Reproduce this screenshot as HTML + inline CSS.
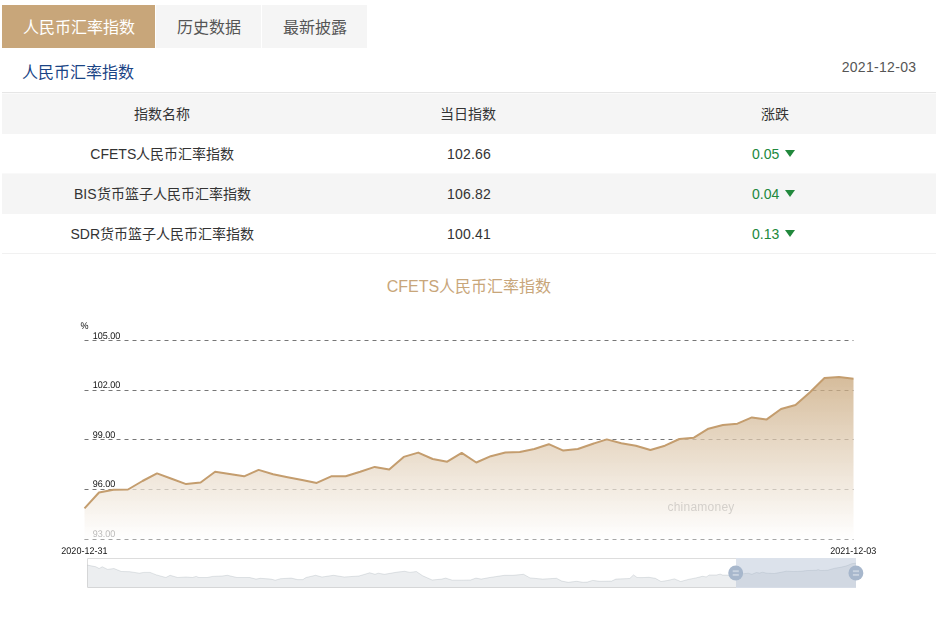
<!DOCTYPE html>
<html lang="zh-CN"><head><meta charset="utf-8"><title>人民币汇率指数</title>
<style>
html,body{margin:0;padding:0;background:#fff;}
body{width:943px;height:626px;position:relative;overflow:hidden;font-family:"Liberation Sans",sans-serif;color:#333;}
.tab{position:absolute;top:5px;height:43px;line-height:45px;font-size:16px;text-align:center;background:#f5f5f5;color:#555;}
.tab.on{background:#c8a67a;color:#fff;}
.h{position:absolute;left:22px;top:60.6px;height:24px;line-height:24px;font-size:16px;color:#1a4485;}
.date{position:absolute;right:26.7px;top:58px;height:18px;line-height:18px;font-size:14px;color:#555;letter-spacing:0.3px;}
.tb{position:absolute;left:2px;top:92px;width:934px;}
.bt{height:1px;background:#e6e6e6;}
.bt2{height:1px;background:#fafafa;}
.r{position:relative;height:40px;line-height:40px;font-size:14px;color:#333;}
.r.g{background:#f5f5f5;}
.r span{position:absolute;top:0;white-space:nowrap;}
.c1{left:0;width:320.6px;text-align:center;}
.c2{left:320px;width:294px;text-align:center;letter-spacing:0.2px;}
.hd .c2{left:319px;letter-spacing:0;}
.c3{left:613px;width:320px;text-align:center;}
.n{left:750px;color:#21883c;}
.tri{position:absolute;left:783px;top:16px;width:0;height:0;border-left:5px solid transparent;border-right:5px solid transparent;border-top:7px solid #21883c;}
.bb{position:absolute;left:2px;top:253px;width:934px;height:1px;background:#f1f1f1;}
.fr{position:absolute;left:2px;top:173px;width:934px;height:1px;background:#f9f9f9;}
svg{position:absolute;left:0;top:260px;}
svg text{font-family:"Liberation Sans",sans-serif;}
</style></head><body>
<div class="tab on" style="left:2px;width:153px;">人民币汇率指数</div>
<div class="tab" style="left:156px;width:105px;">历史数据</div>
<div class="tab" style="left:262px;width:105px;">最新披露</div>
<div class="h">人民币汇率指数</div>
<div class="date">2021-12-03</div>
<div class="tb">
<div class="bt"></div><div class="bt2"></div>
<div class="r g hd"><span class="c1">指数名称</span><span class="c2">当日指数</span><span class="c3">涨跌</span></div>
<div class="r"><span class="c1">CFETS人民币汇率指数</span><span class="c2">102.66</span><span class="n">0.05</span><i class="tri"></i></div>
<div class="r g"><span class="c1">BIS货币篮子人民币汇率指数</span><span class="c2">106.82</span><span class="n">0.04</span><i class="tri"></i></div>
<div class="r"><span class="c1">SDR货币篮子人民币汇率指数</span><span class="c2">100.41</span><span class="n">0.13</span><i class="tri"></i></div>
</div>
<div class="bb"></div><div class="fr"></div>
<svg width="943" height="366" viewBox="0 0 943 366">
<defs>
<linearGradient id="ag" gradientUnits="userSpaceOnUse" x1="0" y1="117" x2="0" y2="279.5">
<stop offset="0" stop-color="#c8a67a" stop-opacity="0.75"/>
<stop offset="1" stop-color="#ffffff" stop-opacity="0.7"/>
</linearGradient>
</defs>
<text x="469" y="32" text-anchor="middle" font-size="16" fill="#c8a67a">CFETS人民币汇率指数</text>
<g stroke="#767676" stroke-width="1" stroke-dasharray="4 4" fill="none"><line x1="84.5" x2="853.5" y1="80.5" y2="80.5"/><line x1="84.5" x2="853.5" y1="130.5" y2="130.5"/><line x1="84.5" x2="853.5" y1="179.5" y2="179.5"/><line x1="84.5" x2="853.5" y1="229.5" y2="229.5"/><line x1="84.5" x2="853.5" y1="279.5" y2="279.5"/></g>
<g font-size="9.7" fill="#111" text-rendering="geometricPrecision" opacity="0.99"><text transform="translate(92.7,78.7) scale(0.93,1)">105.00</text><text transform="translate(92.7,128.2) scale(0.93,1)">102.00</text><text transform="translate(92.7,177.8) scale(0.93,1)">99.00</text><text transform="translate(92.7,227.4) scale(0.93,1)">96.00</text><text transform="translate(92.7,277.0) scale(0.93,1)">93.00</text>
<text transform="translate(84.6,68.80000000000001) scale(0.93,1)" text-anchor="middle">%</text>
<text transform="translate(84.4,294) scale(0.93,1)" text-anchor="middle">2020-12-31</text>
<text transform="translate(853.3,294) scale(0.93,1)" text-anchor="middle">2021-12-03</text>
</g>
<polygon points="84.5,248.4 99.0,232.5 113.5,229.8 128.0,229.5 142.5,221.0 157.0,213.4 171.6,218.7 186.1,224.1 200.6,222.5 215.1,211.8 229.6,214.0 244.1,216.3 258.6,209.9 273.1,214.2 287.6,217.2 302.1,220.1 316.7,222.9 331.2,216.3 345.7,216.3 360.2,211.8 374.7,206.9 389.2,209.6 403.7,196.9 418.2,192.6 432.7,199.0 447.2,201.7 461.7,192.9 476.3,202.5 490.8,196.2 505.3,192.5 519.8,192.1 534.3,189.0 548.8,184.2 563.3,190.6 577.8,189.0 592.3,184.0 606.8,179.4 621.3,183.2 635.9,185.7 650.4,190.0 664.9,185.7 679.4,179.0 693.9,177.7 708.4,168.7 722.9,165.0 737.4,163.7 751.9,157.4 766.4,159.6 781.0,149.0 795.5,145.0 810.0,132.3 824.5,118.0 839.0,117.0 853.5,118.8 853.5,279.5 84.5,279.5" fill="url(#ag)"/>
<text x="701" y="250.7" text-anchor="middle" font-size="12" letter-spacing="0.25" fill="#d4d0cb">chinamoney</text>
<polyline points="84.5,248.4 99.0,232.5 113.5,229.8 128.0,229.5 142.5,221.0 157.0,213.4 171.6,218.7 186.1,224.1 200.6,222.5 215.1,211.8 229.6,214.0 244.1,216.3 258.6,209.9 273.1,214.2 287.6,217.2 302.1,220.1 316.7,222.9 331.2,216.3 345.7,216.3 360.2,211.8 374.7,206.9 389.2,209.6 403.7,196.9 418.2,192.6 432.7,199.0 447.2,201.7 461.7,192.9 476.3,202.5 490.8,196.2 505.3,192.5 519.8,192.1 534.3,189.0 548.8,184.2 563.3,190.6 577.8,189.0 592.3,184.0 606.8,179.4 621.3,183.2 635.9,185.7 650.4,190.0 664.9,185.7 679.4,179.0 693.9,177.7 708.4,168.7 722.9,165.0 737.4,163.7 751.9,157.4 766.4,159.6 781.0,149.0 795.5,145.0 810.0,132.3 824.5,118.0 839.0,117.0 853.5,118.8" fill="none" stroke="#c49d6e" stroke-width="2" stroke-linejoin="round"/>
<path d="M736,298.5 H87.5 V327.5 H736" fill="none" stroke="#ddd" stroke-width="1"/>
<polygon points="87.5,305.1 95.9,306.8 99.1,308.5 102.3,306.8 107.6,309.4 113.9,308.5 121.4,311.5 129.8,311.7 139.4,313.2 143.6,312.4 150.0,312.4 156.4,314.9 165.9,317.5 170.1,315.3 177.6,317.5 186.0,317.0 192.4,317.5 196.2,316.4 198.8,317.5 207.3,317.5 212.6,316.4 222.1,316.0 227.4,315.3 236.9,317.5 249.7,317.5 256.0,319.1 260.3,318.3 270.9,319.1 275.3,320.2 280.6,318.7 291.2,318.1 297.6,319.6 302.9,319.6 306.0,317.5 315.6,315.3 322.0,317.0 333.6,315.3 344.2,317.0 359.0,316.0 369.7,312.8 375.0,314.3 378.2,313.2 384.5,314.3 397.3,312.1 404.7,311.3 410.0,312.4 416.3,311.5 422.7,315.8 432.2,320.0 441.8,319.1 445.6,318.1 452.4,320.2 460.9,320.2 470.6,320.0 475.9,318.1 481.2,319.1 489.7,317.5 504.5,315.3 513.0,315.3 523.6,314.3 530.0,317.9 542.7,319.1 556.5,318.3 561.8,321.1 568.2,322.3 576.6,321.3 583.0,322.3 587.3,322.1 592.6,320.4 600.0,321.3 611.6,321.1 615.9,319.1 629.7,318.5 633.5,314.9 637.1,317.5 642.0,317.6 648.9,317.3 655.3,318.3 661.0,321.5 667.4,320.5 674.4,318.9 680.7,321.5 688.4,319.4 696.0,317.9 702.4,316.3 706.2,316.9 709.4,315.0 716.4,315.0 720.2,314.1 722.7,315.1 728.4,315.1 736.0,314.4 743.1,313.8 748.2,313.2 751.9,314.3 756.4,312.5 759.5,313.1 762.7,312.2 766.5,313.2 774.2,313.5 779.3,312.6 786.3,311.2 793.3,311.5 800.9,311.3 807.3,310.5 816.2,310.3 818.1,309.6 820.6,310.5 827.6,310.3 834.0,308.4 841.6,307.1 846.7,305.8 851.8,303.7 856.0,303.2 856,327.5 87.5,327.5" fill="#2f4554" fill-opacity="0.09"/>
<polyline points="87.5,305.1 95.9,306.8 99.1,308.5 102.3,306.8 107.6,309.4 113.9,308.5 121.4,311.5 129.8,311.7 139.4,313.2 143.6,312.4 150.0,312.4 156.4,314.9 165.9,317.5 170.1,315.3 177.6,317.5 186.0,317.0 192.4,317.5 196.2,316.4 198.8,317.5 207.3,317.5 212.6,316.4 222.1,316.0 227.4,315.3 236.9,317.5 249.7,317.5 256.0,319.1 260.3,318.3 270.9,319.1 275.3,320.2 280.6,318.7 291.2,318.1 297.6,319.6 302.9,319.6 306.0,317.5 315.6,315.3 322.0,317.0 333.6,315.3 344.2,317.0 359.0,316.0 369.7,312.8 375.0,314.3 378.2,313.2 384.5,314.3 397.3,312.1 404.7,311.3 410.0,312.4 416.3,311.5 422.7,315.8 432.2,320.0 441.8,319.1 445.6,318.1 452.4,320.2 460.9,320.2 470.6,320.0 475.9,318.1 481.2,319.1 489.7,317.5 504.5,315.3 513.0,315.3 523.6,314.3 530.0,317.9 542.7,319.1 556.5,318.3 561.8,321.1 568.2,322.3 576.6,321.3 583.0,322.3 587.3,322.1 592.6,320.4 600.0,321.3 611.6,321.1 615.9,319.1 629.7,318.5 633.5,314.9 637.1,317.5 642.0,317.6 648.9,317.3 655.3,318.3 661.0,321.5 667.4,320.5 674.4,318.9 680.7,321.5 688.4,319.4 696.0,317.9 702.4,316.3 706.2,316.9 709.4,315.0 716.4,315.0 720.2,314.1 722.7,315.1 728.4,315.1 736.0,314.4 743.1,313.8 748.2,313.2 751.9,314.3 756.4,312.5 759.5,313.1 762.7,312.2 766.5,313.2 774.2,313.5 779.3,312.6 786.3,311.2 793.3,311.5 800.9,311.3 807.3,310.5 816.2,310.3 818.1,309.6 820.6,310.5 827.6,310.3 834.0,308.4 841.6,307.1 846.7,305.8 851.8,303.7 856.0,303.2" fill="none" stroke="#2f4554" stroke-opacity="0.26" stroke-width="0.5"/>
<rect x="736" y="298" width="120" height="30" fill="#a7b7cc" fill-opacity="0.4"/>
<g fill="#a7b7cc">
<circle cx="735.7" cy="312.95000000000005" r="7.45"/><circle cx="855.9" cy="312.95000000000005" r="7.45"/>
</g>
<g stroke="#c9d3e0" stroke-width="1.9">
<line x1="732.7" x2="738.8" y1="311.20000000000005" y2="311.20000000000005"/><line x1="732.7" x2="738.8" y1="314.9" y2="314.9"/>
<line x1="852.9" x2="859" y1="311.20000000000005" y2="311.20000000000005"/><line x1="852.9" x2="859" y1="314.9" y2="314.9"/>
</g>
</svg>
</body></html>
